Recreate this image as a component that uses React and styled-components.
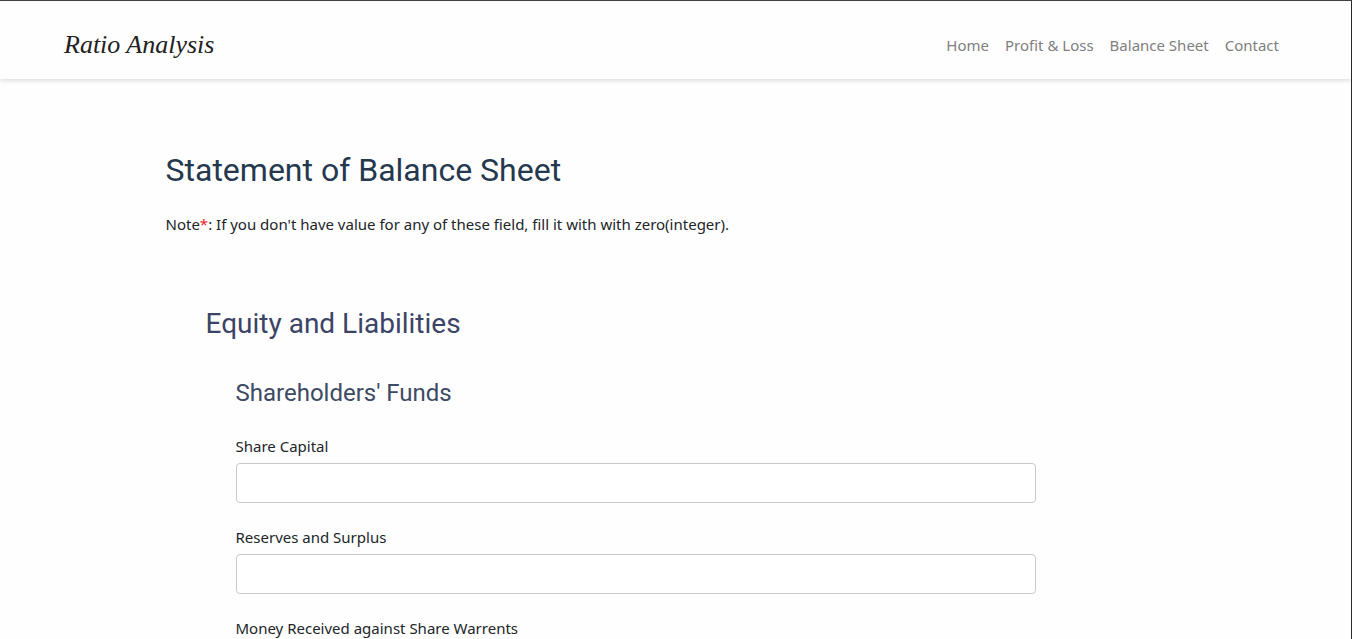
import React from "react";
import styled, { createGlobalStyle } from "styled-components";

const GlobalStyle = createGlobalStyle`
  *, *::before, *::after { box-sizing: border-box; }
  body {
    margin: 0;
    background: #fefefe;
    color: #212529;
    font-family: "Segoe UI", "Noto Sans", "Open Sans", sans-serif;
    font-size: 15px;
    line-height: 24px;
  }
`;

const Page = styled.div`
  min-height: 100vh;
  border-top: 1px solid #444145;
  border-right: 1px solid #2b2b2e;
`;

const Header = styled.header`
  display: flex;
  align-items: center;
  justify-content: space-between;
  flex-wrap: wrap;
  min-height: 78px;
  padding: 10px 64px 0;
  background: #fefefe;
  box-shadow: 0 2px 4px rgba(0, 0, 0, 0.12);
`;

const Brand = styled.a`
  color: #212121;
  font-family: "Monotype Corsiva", "Liberation Serif", serif;
  font-size: 26px;
  font-style: italic;
  line-height: 36px;
  text-decoration: none;
`;

const Nav = styled.nav`
  display: flex;
  flex-wrap: wrap;
`;

const NavLink = styled.a`
  padding: 0 8px;
  color: #7f7f7f;
  text-decoration: none;
`;

const Main = styled.main`
  max-width: 1020px;
  margin: 0 auto;
  padding: 72px 0 48px;
`;

const Title = styled.h1`
  margin: 0;
  color: #24384e;
  font-family: Roboto, sans-serif;
  font-size: 32px;
  font-weight: 400;
  line-height: 38px;
`;

const Note = styled.p`
  margin: 23px 0 0;
`;

const Asterisk = styled.span`
  color: #e8262d;
`;

const Section = styled.section`
  margin-top: 71px;
  padding-left: 40px;
`;

const SectionTitle = styled.h2`
  margin: 0;
  color: #3c4466;
  font-family: Roboto, sans-serif;
  font-size: 28px;
  font-weight: 400;
  line-height: 34px;
`;

const Group = styled.form`
  max-width: 830px;
  margin-top: 38px;
  padding-left: 30px;
`;

const GroupTitle = styled.h3`
  margin: 0 0 27px;
  color: #3c4a63;
  font-family: Roboto, sans-serif;
  font-size: 24px;
  font-weight: 400;
  line-height: 28px;
`;

const Field = styled.div`
  display: flex;
  flex-direction: column;
  gap: 5px;
  margin-bottom: 22px;
`;

const Input = styled.input`
  width: 100%;
  height: 40px;
  padding: 8px 12px;
  border: 1px solid #c9c9cb;
  border-radius: 4px;
  background: #ffffff;
  color: inherit;
  font: inherit;
`;

const links = ["Home", "Profit & Loss", "Balance Sheet", "Contact"];

const fields = [
  { id: "share-capital", label: "Share Capital" },
  { id: "reserves-surplus", label: "Reserves and Surplus" },
  { id: "share-warrents", label: "Money Received against Share Warrents" },
];

export default function App() {
  return (
    <>
      <GlobalStyle />
      <Page>
        <Header>
          <Brand href="#">Ratio Analysis</Brand>
          <Nav>
            {links.map((link) => (
              <NavLink key={link} href="#">{link}</NavLink>
            ))}
          </Nav>
        </Header>
        <Main>
          <Title>Statement of Balance Sheet</Title>
          <Note>
            Note<Asterisk>*</Asterisk>: If you don't have value for any of these field, fill it with with zero(integer).
          </Note>
          <Section>
            <SectionTitle>Equity and Liabilities</SectionTitle>
            <Group>
              <GroupTitle>Shareholders' Funds</GroupTitle>
              {fields.map(({ id, label }) => (
                <Field key={id}>
                  <label htmlFor={id}>{label}</label>
                  <Input id={id} name={id} type="text" />
                </Field>
              ))}
            </Group>
          </Section>
        </Main>
      </Page>
    </>
  );
}
